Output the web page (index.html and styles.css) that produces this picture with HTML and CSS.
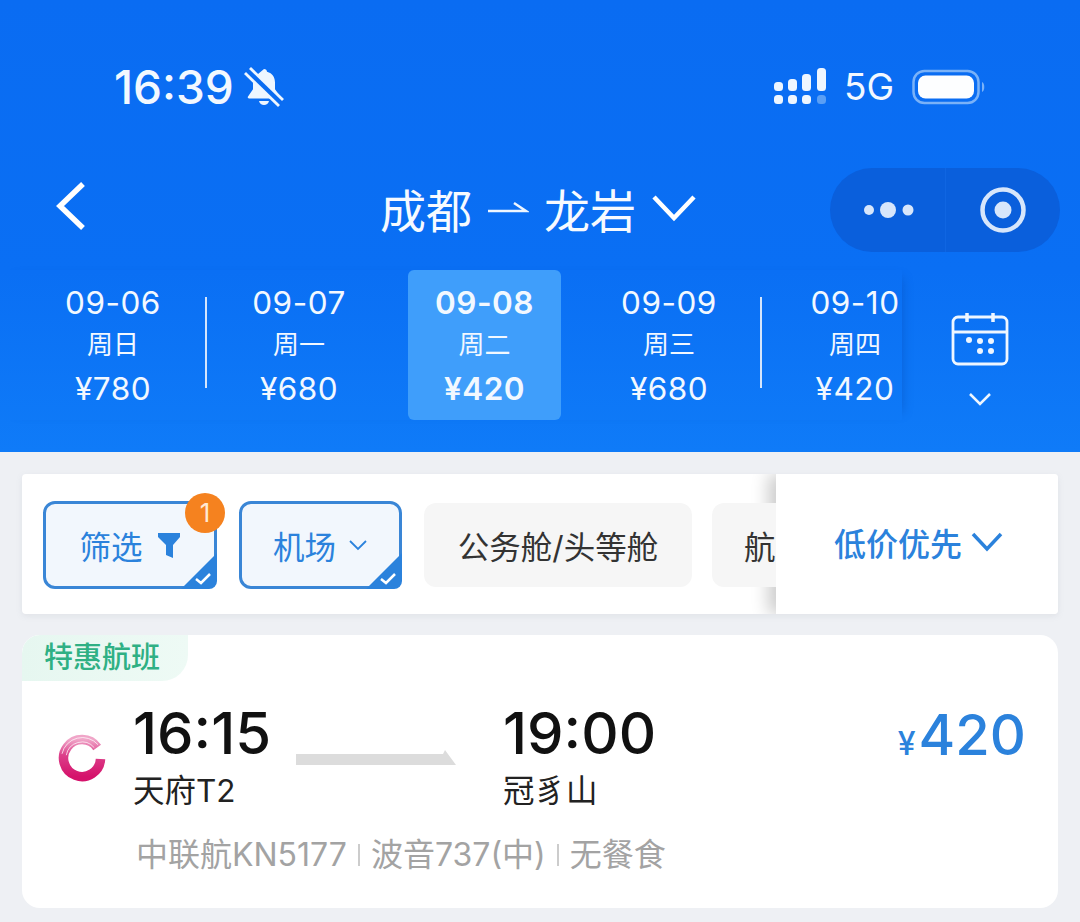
FILE: index.html
```html
<!DOCTYPE html>
<html lang="zh">
<head>
<meta charset="utf-8">
<title>成都 → 龙岩</title>
<link rel="stylesheet" href="styles.css">
</head>
<body>
<header class="hero">
  <div class="status">
    <div class="status-left">
      <span class="clock">16:39</span>
      <svg class="bell" viewBox="0 0 40 40" width="40" height="40">
        <path d="M20 2c1.800 0 3 1.200 3 2.800 5.500 1.400 8 5.500 8 11v6.500l5 7.200c.6 1 .1 2-1 2H5c-1.100 0-1.600-1-1-2l5-7.200v-6.500c0-2 .4-4 1.200-5.600z" fill="#eef6ff"/>
        <path d="M15 34h10c-.6 2.500-2.600 4-5 4s-4.400-1.500-5-4z" fill="#eef6ff"/>
        <path d="M2 3l36 34" stroke="#0a6cf2" stroke-width="7"/>
        <path d="M6 1l33 32" stroke="#eef6ff" stroke-width="2.800"/>
        <path d="M1 6l34 33" stroke="#eef6ff" stroke-width="2.800"/>
      </svg>
    </div>
    <div class="status-right">
      <svg class="signal" viewBox="0 0 52 38" width="52" height="38">
        <g fill="#eef6ff">
          <rect x="0" y="14" width="9" height="9" rx="3.500"/><rect x="0" y="27" width="9" height="9" rx="3.500"/>
          <rect x="14" y="11" width="9" height="12" rx="3.500"/><rect x="14" y="27" width="9" height="9" rx="3.500"/>
          <rect x="28" y="6" width="9" height="17" rx="3.500"/><rect x="28" y="27" width="9" height="9" rx="3.500"/>
          <rect x="43" y="0" width="9" height="23" rx="3.500"/>
        </g>
        <rect x="43" y="27" width="9" height="9" rx="3.500" fill="#5a9ff5"/>
      </svg>
      <span class="net">5G</span>
      <svg class="battery" viewBox="0 0 74 36" width="74" height="36">
        <rect x="1.500" y="2" width="65" height="32" rx="11" fill="none" stroke="#7ab2f8" stroke-width="2.500"/>
        <rect x="6" y="6.500" width="56" height="23" rx="7.500" fill="#fdfeff"/>
        <path d="M70 13c3 1 3 9 0 10z" fill="#7ab2f8"/>
      </svg>
    </div>
  </div>

  <nav class="navbar">
    <svg class="back" viewBox="0 0 34 50" width="34" height="50"><path d="M29 3L6 25l23 22" fill="none" stroke="#fff" stroke-width="5.500"/></svg>
    <div class="route">
      <span>成都</span>
      <svg class="route-arrow" viewBox="0 0 42 14" width="42" height="14"><path d="M1 10h38L27 2" fill="none" stroke="#eef6ff" stroke-width="2.500"/></svg>
      <span>龙岩</span>
      <svg class="route-chev" viewBox="0 0 46 28" width="46" height="28"><path d="M3 3l20 21L43 3" fill="none" stroke="#fff" stroke-width="4.500"/></svg>
    </div>
    <div class="capsule">
      <div class="cap-cell">
        <svg viewBox="0 0 52 20" width="52" height="20"><g fill="#d7e6fb"><circle cx="6" cy="10" r="5"/><circle cx="25" cy="10" r="8"/><circle cx="45" cy="10" r="5.500"/></g></svg>
      </div>
      <div class="cap-cell cap-cell-right">
        <svg viewBox="0 0 48 48" width="48" height="48"><circle cx="24" cy="24" r="20.500" fill="none" stroke="#d7e6fb" stroke-width="4.500"/><circle cx="24" cy="24" r="8.500" fill="#d7e6fb"/></svg>
      </div>
    </div>
  </nav>

  <div class="dates">
    <div class="date-list">
      <div class="date"><b>09-06</b><span>周日</span><em>¥780</em></div>
      <div class="date date-rule"><b>09-07</b><span>周一</span><em>¥680</em></div>
      <div class="date date-on"><b>09-08</b><span>周二</span><em>¥420</em></div>
      <div class="date date-rule-right"><b>09-09</b><span>周三</span><em>¥680</em></div>
      <div class="date"><b>09-10</b><span>周四</span><em>¥420</em></div>
    </div>
    <div class="calendar">
      <svg viewBox="0 0 58 54" width="58" height="54">
        <g fill="none" stroke="#eef6ff" stroke-width="2.800">
          <rect x="2" y="5" width="54" height="47" rx="5"/><path d="M2 20h54"/>
          <path d="M16 1v9M42 1v9" stroke-width="3.500"/>
        </g>
        <g fill="#eef6ff">
          <circle cx="18" cy="28" r="3"/><circle cx="29" cy="29" r="3"/><circle cx="40" cy="29" r="3"/>
          <circle cx="29" cy="39" r="3"/><circle cx="40" cy="39" r="3"/>
        </g>
      </svg>
      <svg viewBox="0 0 24 16" width="24" height="16"><path d="M2 3l10 10L22 3" fill="none" stroke="#eef6ff" stroke-width="2.500"/></svg>
    </div>
  </div>
</header>

<main class="content">
  <section class="filters">
    <div class="chips">
      <div class="chip chip-on chip-filter">
        <span>筛选</span>
        <svg viewBox="0 0 24 27" width="24" height="27"><path d="M1 1h22v4l-7 8v13l-7-3V13L1 5z" fill="#2b82dc"/></svg>
        <i class="badge">1</i>
        <svg class="tick" viewBox="0 0 36 36" width="36" height="36"><path d="M36 0v28a8 8 0 0 1-8 8H0z" fill="#2b82dc"/><path d="M15 26l5 4 9-9" fill="none" stroke="#fff" stroke-width="2.500"/></svg>
      </div>
      <div class="chip chip-on chip-airport">
        <span>机场</span>
        <svg viewBox="0 0 20 12" width="20" height="12"><path d="M2 2l8 8 8-8" fill="none" stroke="#2b82dc" stroke-width="1.800"/></svg>
        <svg class="tick" viewBox="0 0 36 36" width="36" height="36"><path d="M36 0v28a8 8 0 0 1-8 8H0z" fill="#2b82dc"/><path d="M15 26l5 4 9-9" fill="none" stroke="#fff" stroke-width="2.500"/></svg>
      </div>
      <div class="chip chip-plain chip-cabin">公务舱/头等舱</div>
      <div class="chip chip-plain chip-cut">航</div>
    </div>
    <div class="sort">
      <span>低价优先</span>
      <svg viewBox="0 0 32 20" width="32" height="20"><path d="M2 2l14 15L30 2" fill="none" stroke="#2b82dc" stroke-width="3.500"/></svg>
    </div>
  </section>

  <article class="flight">
    <div class="tag">特惠航班</div>
    <div class="flight-main">
      <svg class="logo" viewBox="0 0 48 48" width="48" height="48">
        <defs>
          <linearGradient id="ring" x1="0" y1="0" x2="0" y2="1">
            <stop offset="0" stop-color="#f0a5c8"/>
            <stop offset=".42" stop-color="#dc3f8a"/>
            <stop offset="1" stop-color="#d5126b"/>
          </linearGradient>
        </defs>
        <path d="M42.500 25A18.500 18.500 0 1 1 39.150 13.400" fill="none" stroke="url(#ring)" stroke-width="9.500"/>
        <path d="M8.300 21.200A16 16 0 0 1 36.300 13.700M4 19.800A20.800 20.800 0 0 1 40 10.700" fill="none" stroke="#fff" stroke-width="1" opacity=".7"/>
      </svg>
      <div class="stop stop-from">
        <div class="time">16:15</div>
        <div class="place">天府T2</div>
      </div>
      <svg class="path-arrow" viewBox="0 0 160 15" width="160" height="15"><path d="M0 4h147l2-4 11 15H0z" fill="#dcdcdc"/></svg>
      <div class="stop">
        <div class="time">19:00</div>
        <div class="place">冠豸山</div>
      </div>
      <div class="price"><small>¥</small>420</div>
    </div>
    <div class="meta">
      <span>中联航KN5177</span><i></i><span>波音737(中)</span><i></i><span>无餐食</span>
    </div>
  </article>
</main>
</body>
</html>
```

FILE: styles.css
```css
* { box-sizing: border-box; }
html, body { margin: 0; padding: 0; }
body {
  width: 1080px;
  height: 922px;
  overflow: hidden;
  background: #eef0f4;
  font-family: "Inter", "Noto Sans CJK SC", sans-serif;
}
svg { display: block; flex: none; }

.hero {
  height: 452px;
  background: linear-gradient(180deg, #0a6cf2 0%, #0a6ff4 60%, #0f7bf8 100%);
  color: #f2f8ff;
  padding-top: 62px;
}

.status {
  height: 50px;
  display: flex;
  align-items: center;
  justify-content: space-between;
  padding: 0 94px 0 114px;
}
.status-left { display: flex; align-items: center; gap: 10px; }
.clock { font-size: 46px; font-weight: 500; line-height: 50px; }
.status-right { display: flex; align-items: center; gap: 18px; }
.net { font-size: 37px; line-height: 50px; }

.navbar {
  height: 84px;
  margin-top: 56px;
  display: flex;
  align-items: center;
  padding: 0 20px 0 54px;
}
.back { margin-top: -8px; }
.route {
  flex: 1;
  display: flex;
  align-items: center;
  justify-content: center;
  gap: 15px;
  font-size: 46px;
  color: #f6faff;
  padding-left: 159px;
  margin-top: -4px;
}
.capsule {
  width: 230px;
  height: 84px;
  border-radius: 42px;
  background: #0a5fdc;
  display: flex;
}
.cap-cell { width: 115px; display: flex; align-items: center; justify-content: center; padding-left: 2px; }
.cap-cell-right { padding: 0; border-left: 1px solid #1066e2; }

.dates {
  display: flex;
  margin-top: 18px;
  height: 150px;
}
.date-list {
  display: flex;
  width: 902px;
  flex: none;
  padding-left: 20px;
  overflow: hidden;
  box-shadow: 8px 0 10px -8px rgba(6, 70, 170, .45);
}
.date {
  width: 186px;
  flex: none;
  display: flex;
  flex-direction: column;
  align-items: center;
  justify-content: center;
  gap: 4px;
  position: relative;
  font-size: 31.500px;
}
.date b { font-weight: 400; line-height: 39px; letter-spacing: .5px; }
.date span { font-size: 26px; line-height: 39px; margin: -1px 0 1px; }
.date em { font-style: normal; line-height: 39px; letter-spacing: .5px; }
.date-rule::before,
.date-rule-right::after {
  content: "";
  position: absolute;
  top: 27px;
  height: 91px;
  width: 2px;
  background: #d4e5fc;
}
.date-rule::before { left: -1px; }
.date-rule-right::after { right: 0; }
.date-on {
  width: 153px;
  margin: 0 15px 0 16px;
  background: #3f9efb;
  border-radius: 6px;
}
.date-on b, .date-on em { font-weight: 600; }
.calendar {
  flex: 1;
  display: flex;
  flex-direction: column;
  align-items: center;
  gap: 25px;
  padding-top: 42px;
  padding-right: 22px;
}

.content { padding: 22px 22px 0; }

.filters {
  height: 140px;
  background: #fff;
  border-radius: 4px;
  display: flex;
  box-shadow: 0 2px 6px rgba(120, 130, 150, .12);
  overflow: hidden;
}
.chips {
  flex: 1;
  min-width: 0;
  display: flex;
  align-items: center;
  gap: 22px;
  padding-left: 21px;
  overflow: hidden;
  white-space: nowrap;
  padding-top: 2px;
}
.chip {
  height: 88px;
  flex: none;
  display: flex;
  align-items: center;
  justify-content: center;
  font-size: 31.500px;
  border-radius: 12px;
  position: relative;
}
.chip-on {
  color: #2b82dc;
  background: #f2f7fd;
  border: 3px solid #3a86d6;
}
.chip-filter { width: 174px; gap: 14px; }
.chip-airport { width: 163px; gap: 12px; }
.chip-plain {
  color: #333;
  background: #f6f6f6;
  padding: 0 32px;
  height: 84px;
}
.chip-cabin { width: 268px; padding: 0; }
.chip-cut { margin-left: -2px; width: 110px; justify-content: flex-start; }
.badge {
  position: absolute;
  top: -11px;
  right: -11px;
  width: 40px;
  height: 40px;
  border-radius: 50%;
  background: #f5821f;
  color: #ffe9d4;
  font-style: normal;
  font-size: 26px;
  line-height: 40px;
  text-align: center;
}
.tick { position: absolute; right: -3px; bottom: -3px; }
.sort {
  width: 282px;
  flex: none;
  display: flex;
  align-items: center;
  gap: 9px;
  padding: 0 0 4px 58px;
  background: #fff;
  color: #2b82dc;
  font-size: 32px;
  font-weight: 500;
  box-shadow: -8px 0 16px rgba(0, 0, 0, .2);
}

.flight {
  margin-top: 21px;
  height: 273px;
  background: #fff;
  border-radius: 18px;
  overflow: hidden;
}
.tag {
  width: 166px;
  height: 46px;
  background: linear-gradient(90deg, #e6f7f0, #eefaf5);
  border-radius: 18px 0 26px 0;
  color: #2fb084;
  font-size: 29px;
  font-weight: 500;
  line-height: 46px;
  padding-left: 22px;
}
.flight-main {
  display: flex;
  align-items: flex-start;
  margin-top: 22px;
  padding: 0 32px 0 36px;
}
.logo { margin-top: 31px; }
.stop-from { margin-left: 27px; width: 163px; }
.path-arrow { margin-top: 47px; }
.stop { flex: none; }
.stop:not(.stop-from) { margin-left: 47px; }
.time { font-size: 58px; font-weight: 500; line-height: 60px; color: #111; }
.place { font-size: 31.500px; line-height: 50px; color: #222; margin-top: 3px; }
.price {
  margin-left: auto;
  color: #2b82dc;
  font-size: 56px;
  font-weight: 500;
  line-height: 60px;
  margin-top: 2px;
}
.price small { font-size: 32px; margin-right: 3px; }
.meta {
  display: flex;
  align-items: center;
  margin-top: 16px;
  padding-left: 114px;
  font-size: 32px;
  line-height: 46px;
  color: #a3a3a3;
}
.meta i { width: 2px; height: 22px; background: #ccc; margin: 0 11px; }
```
